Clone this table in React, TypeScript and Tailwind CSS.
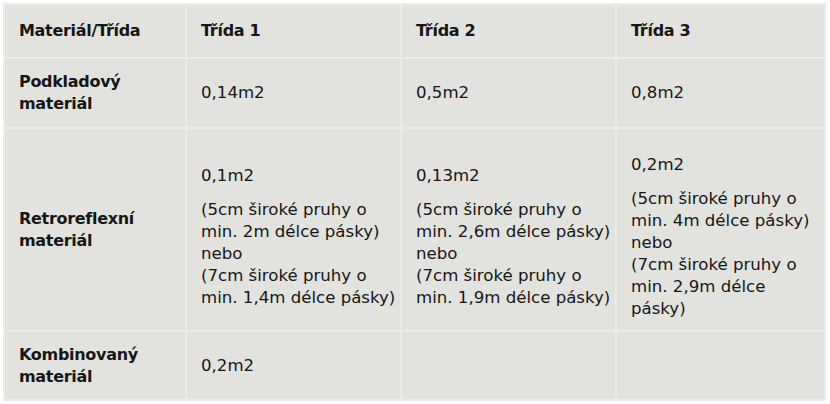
import React from "react";

const cell = "border-2 border-[#ebebe7] px-[14px] align-middle";
const head = "font-bold text-[16px] tracking-[-0.3px]";
const retro = "pt-[14px]";

function Lines({ lines }: { lines: string[] }) {
  return (
    <div>
      {lines.map((l, i) => (
        <div key={i} className="whitespace-nowrap">{l}</div>
      ))}
    </div>
  );
}

export default function App() {
  return (
    <div className="w-[830px] h-[404px] bg-white pt-[3px] pl-[3px]" style={{ fontFamily: '"DejaVu Sans", "Noto Sans", sans-serif' }}>
      <table className="border-collapse bg-[#e2e2de] text-[#161616] text-[16.6px] leading-[22px] table-fixed w-[821px]">
        <colgroup>
          <col className="w-[182px]" />
          <col className="w-[215px]" />
          <col className="w-[215px]" />
          <col className="w-[209px]" />
        </colgroup>
        <tbody>
          <tr className="h-[54px]">
            <td className={`${cell} ${head}`}>Materiál/Třída</td>
            <td className={`${cell} ${head}`}>Třída 1</td>
            <td className={`${cell} ${head}`}>Třída 2</td>
            <td className={`${cell} ${head}`}>Třída 3</td>
          </tr>
          <tr className="h-[70px]">
            <td className={`${cell} ${head}`}>
              <Lines lines={["Podkladový", "materiál"]} />
            </td>
            <td className={cell}>0,14m2</td>
            <td className={cell}>0,5m2</td>
            <td className={cell}>0,8m2</td>
          </tr>
          <tr className="h-[203px]">
            <td className={`${cell} ${head}`}>
              <Lines lines={["Retroreflexní", "materiál"]} />
            </td>
            <td className={`${cell} ${retro}`}>
              <div className="mb-[12px]">0,1m2</div>
              <Lines lines={["(5cm široké pruhy o", "min. 2m délce pásky)", "nebo", "(7cm široké pruhy o", "min. 1,4m délce pásky)"]} />
            </td>
            <td className={`${cell} ${retro}`}>
              <div className="mb-[12px]">0,13m2</div>
              <Lines lines={["(5cm široké pruhy o", "min. 2,6m délce pásky)", "nebo", "(7cm široké pruhy o", "min. 1,9m délce pásky)"]} />
            </td>
            <td className={`${cell} ${retro}`}>
              <div className="mb-[12px]">0,2m2</div>
              <Lines lines={["(5cm široké pruhy o", "min. 4m délce pásky)", "nebo", "(7cm široké pruhy o", "min. 2,9m délce", "pásky)"]} />
            </td>
          </tr>
          <tr className="h-[69px]">
            <td className={`${cell} ${head}`}>
              <Lines lines={["Kombinovaný", "materiál"]} />
            </td>
            <td className={cell}>0,2m2</td>
            <td className={cell}></td>
            <td className={cell}></td>
          </tr>
        </tbody>
      </table>
    </div>
  );
}
